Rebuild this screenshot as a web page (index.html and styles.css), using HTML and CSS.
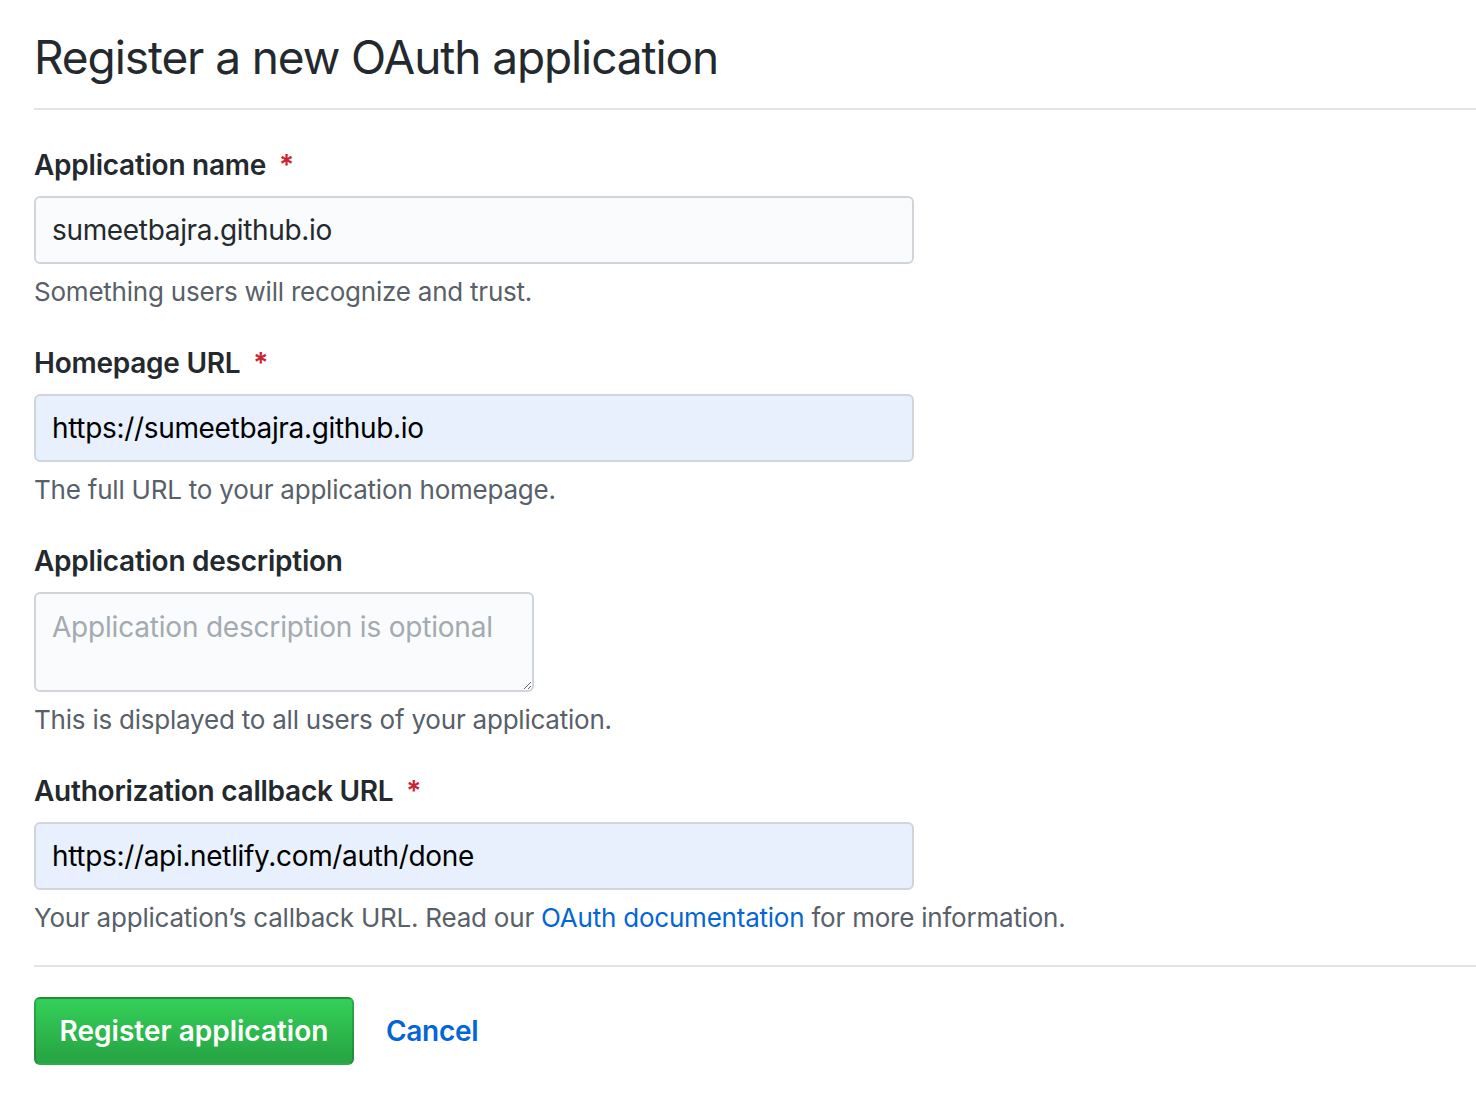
FILE: index.html
```html
<!DOCTYPE html>
<html>
<head>
    <title>Register a new OAuth application</title>
    <link rel="stylesheet" href="styles.css">
</head>
<body>
    <div class="page">
        <div class="subhead">
            <h1 class="subhead-title">Register a new OAuth application</h1>
        </div>

        <form class="oauth-form">
            <div class="form-group">
                <label class="form-label" for="appName">Application name <span class="required">*</span></label>
                <input class="form-control" type="text" id="appName" value="sumeetbajra.github.io">
                <p class="note">Something users will recognize and trust.</p>
            </div>

            <div class="form-group">
                <label class="form-label" for="homeUrl">Homepage URL <span class="required">*</span></label>
                <input class="form-control autofilled" type="text" id="homeUrl" value="https://sumeetbajra.github.io">
                <p class="note">The full URL to your application homepage.</p>
            </div>

            <div class="form-group">
                <label class="form-label" for="appDesc">Application description</label>
                <textarea class="form-control textarea" id="appDesc" placeholder="Application description is optional"></textarea>
                <p class="note">This is displayed to all users of your application.</p>
            </div>

            <div class="form-group last">
                <label class="form-label" for="callbackUrl">Authorization callback URL <span class="required">*</span></label>
                <input class="form-control autofilled" type="text" id="callbackUrl" value="https://api.netlify.com/auth/done">
                <p class="note">Your application’s callback URL. Read our <a href="#">OAuth documentation</a> for more information.</p>
            </div>

            <div class="form-actions">
                <button type="submit" class="btn-primary">Register application</button>
                <a href="#" class="btn-link">Cancel</a>
            </div>
        </form>
    </div>
</body>
</html>
```

FILE: styles.css
```css
body, html {
    margin: 0;
    background: #fff;
    font-family: Inter, "Liberation Sans", Arial, sans-serif;
    color: #24292e;
}

.page {
    padding: 27px 0 0 34px;
}

.subhead {
    border-bottom: 2px solid #e1e4e8;
    padding-bottom: 21px;
    margin-bottom: 37px;
}

.subhead-title {
    margin: 0;
    font-size: 46px;
    font-weight: 400;
    line-height: 60px;
    letter-spacing: -1.1px;
}

.form-group {
    margin-bottom: 35px;
}

.form-group.last {
    margin-bottom: 29px;
}

.form-label {
    display: block;
    font-size: 28px;
    font-weight: 600;
    line-height: 36px;
    margin-bottom: 13px;
    letter-spacing: -0.25px;
}

.required {
    color: #cb2431;
    margin-left: 6px;
}

.form-control {
    display: block;
    box-sizing: border-box;
    width: 880px;
    height: 68px;
    padding: 0 16px;
    font-family: inherit;
    font-size: 28px;
    letter-spacing: -0.33px;
    color: #24292e;
    background: #fafbfc;
    border: 2px solid #d1d5da;
    border-radius: 6px;
    outline: none;
}

.form-control.autofilled {
    background: #e8f0fe;
    color: #000;
}

.form-control.textarea {
    width: 500px;
    height: 100px;
    padding: 16px 16px;
    resize: vertical;
    letter-spacing: -0.2px;
}

.form-control::placeholder {
    color: #a3aab1;
}

.note {
    margin: 10px 0 0;
    font-size: 26px;
    line-height: 36px;
    letter-spacing: -0.22px;
    color: #586069;
}

.note a {
    color: #0366d6;
    text-decoration: none;
}

.form-actions {
    border-top: 2px solid #e1e4e8;
    padding-top: 30px;
    display: flex;
    align-items: center;
    gap: 32px;
}

.btn-primary {
    height: 68px;
    width: 320px;
    font-family: inherit;
    font-size: 28px;
    font-weight: 600;
    color: #fff;
    background-image: linear-gradient(-180deg, #34d058 0%, #28a745 90%);
    border: 2px solid rgba(27, 31, 35, 0.2);
    border-radius: 6px;
    cursor: pointer;
}

.btn-link {
    font-size: 28px;
    font-weight: 600;
    letter-spacing: -0.3px;
    color: #0366d6;
    text-decoration: none;
}
```
